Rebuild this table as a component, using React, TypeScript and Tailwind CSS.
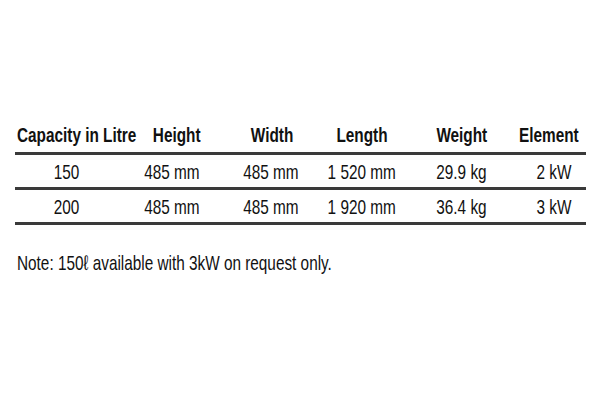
const font = { fontFamily: "'Liberation Sans', Arial, sans-serif" };

function Cell({ w, align, bold, children, pl = 0 }: { w: number; align: "start" | "center" | "end"; bold?: boolean; children: React.ReactNode; pl?: number }) {
  const j = align === "start" ? "justify-start" : align === "center" ? "justify-center" : "justify-end";
  const o = align === "start" ? "origin-left" : align === "center" ? "origin-center" : "origin-right";
  return (
    <div className={`flex ${j} shrink-0`} style={{ width: w, paddingLeft: pl }}>
      <span className={`inline-block whitespace-nowrap scale-x-[0.73] ${o} ${bold ? "font-bold" : ""}`}>{children}</span>
    </div>
  );
}

export default function App() {
  const rows = [
    ["150", "485 mm", "485 mm", "1 520 mm", "29.9 kg", "2 kW"],
    ["200", "485 mm", "485 mm", "1 920 mm", "36.4 kg", "3 kW"],
  ];
  return (
    <div className="w-[600px] h-[400px] bg-white text-[#111] overflow-hidden" style={font}>
      <div className="pt-[124px] pl-[15px] w-[586px] text-[21px] leading-[21px]">
        <div className="flex h-[28px]">
          <Cell w={120} align="start" bold pl={2}>Capacity in Litre</Cell>
          <Cell w={83} align="center" bold>Height</Cell>
          <Cell w={108} align="center" bold>Width</Cell>
          <Cell w={72} align="center" bold>Length</Cell>
          <Cell w={128} align="center" bold>Weight</Cell>
          <Cell w={46} align="center" bold>Element</Cell>
        </div>
        <div className="h-[3px] bg-[#3a3a3a]" />
        {rows.map((r, i) => (
          <div key={i}>
            <div className="flex h-[32px] pt-[6px]">
              <Cell w={104} align="center">{r[0]}</Cell>
              <Cell w={105} align="center">{r[1]}</Cell>
              <Cell w={94} align="center">{r[2]}</Cell>
              <Cell w={87} align="center">{r[3]}</Cell>
              <Cell w={112} align="center">{r[4]}</Cell>
              <Cell w={74} align="center">{r[5]}</Cell>
            </div>
            <div className="h-[3px] bg-[#3a3a3a]" />
          </div>
        ))}
        <div className="mt-[27px] pl-[2px] flex">
          <span className="inline-block whitespace-nowrap scale-x-[0.73] origin-left">
            Note: 150ℓ available with 3kW on request only.
          </span>
        </div>
      </div>
    </div>
  );
}
